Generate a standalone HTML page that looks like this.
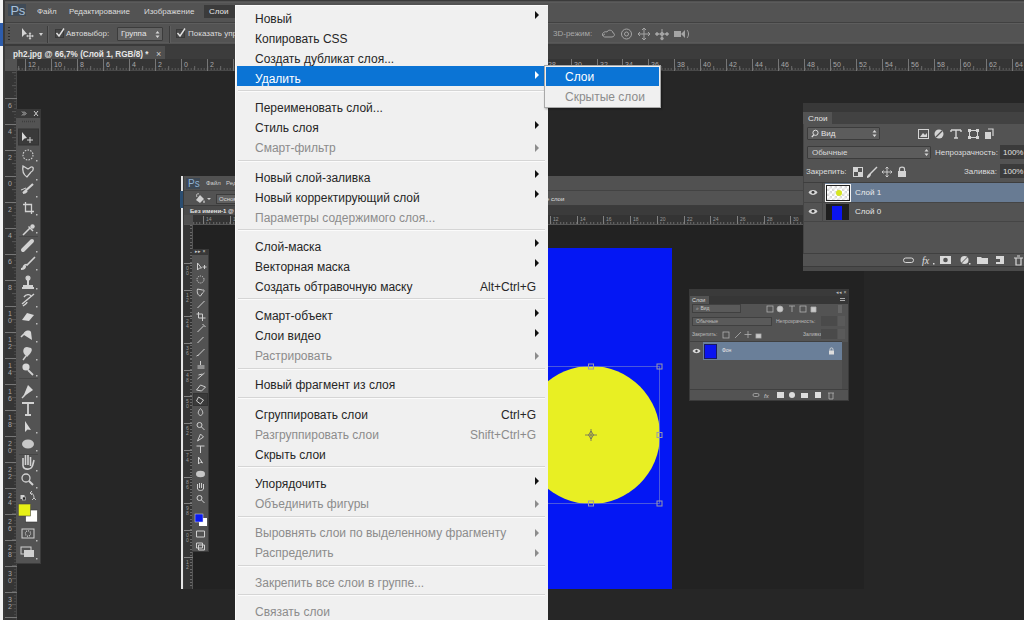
<!DOCTYPE html>
<html><head><meta charset="utf-8">
<style>
*{margin:0;padding:0;box-sizing:border-box}
html,body{width:1024px;height:620px;overflow:hidden;background:#262626;font-family:"Liberation Sans",sans-serif}
.a{position:absolute}
.t{position:absolute;white-space:nowrap;line-height:1}
.m{font-size:12px}
.ui{font-size:8px;color:#dcdcdc}
.rl{font-size:7px;color:#a8a8a8}
svg{position:absolute;overflow:visible}
</style></head>
<body>
<!-- left strip -->
<div class="a" style="left:0;top:0;width:3px;height:620px;background:#f4f4f4"></div>
<div class="a" style="left:0;top:23px;width:3px;height:23px;background:#2d5cab"></div>
<div class="a" style="left:3px;top:0;width:2px;height:620px;background:#3a3a3a"></div>

<!-- menubar -->
<div class="a" style="left:5px;top:0;width:1019px;height:23px;background:#535353;border-top:1px solid #3a3a3a;border-bottom:1px solid #414141"></div>
<div class="a" style="left:8px;top:4px;width:18px;height:12px;background:#3f4a56"></div>
<div class="t" style="left:10.5px;top:4px;font-size:13px;color:#a6c0da;letter-spacing:-0.3px">Ps</div>
<div class="t ui" style="left:37px;top:8px">Файл</div>
<div class="t ui" style="left:69px;top:8px">Редактирование</div>
<div class="t ui" style="left:144px;top:8px">Изображение</div>
<div class="a" style="left:204px;top:5px;width:31px;height:13px;background:#3b3b3b"></div>
<div class="t ui" style="left:209px;top:8px;color:#e8e8e8">Слои</div>

<!-- options bar -->
<div class="a" style="left:5px;top:23px;width:1019px;height:23px;background:#535353;border-bottom:2px solid #3a3a3a"></div>
<div class="a" style="left:5px;top:23px;width:1019px;height:1px;background:#5d5d5d"></div>
<div class="a" style="left:5px;top:42px;width:1019px;height:1px;background:#595959"></div>
<div class="a" style="left:5px;top:2px;width:1019px;height:1px;background:#5b5b5b"></div>
<div class="a" style="left:8px;top:27px;width:2px;height:15px;background-image:repeating-linear-gradient(to bottom,#2e2e2e 0 1px,transparent 1px 3px)"></div>
<svg style="left:21px;top:27px" width="14" height="13" viewBox="0 0 14 13"><path d="M1 1 L1 10 L3.5 7.5 L6 7 Z" fill="#d6d6d6"/><path d="M9 6 V12 M6 9 H12" stroke="#d6d6d6" stroke-width="1.2"/><path d="M8 7 L9 5.6 L10 7 M8 11 L9 12.4 L10 11 M7 8 L5.6 9 L7 10 M11 8 L12.4 9 L11 10" stroke="#d6d6d6" stroke-width=".8" fill="none"/></svg>
<div class="a" style="left:39px;top:33px;width:0;height:0;border-left:2.5px solid transparent;border-right:2.5px solid transparent;border-top:3px solid #d0d0d0"></div>
<div class="a" style="left:47px;top:26px;width:1px;height:17px;background:#3c3c3c"></div>
<div class="a" style="left:48px;top:26px;width:1px;height:17px;background:#5e5e5e"></div>
<div class="a" style="left:55px;top:29px;width:9px;height:9px;background:#474747;border:1px solid #3a3a3a"></div>
<svg style="left:55px;top:27px" width="10" height="11" viewBox="0 0 10 11"><path d="M1.5 6 L4 9 L9 1.5" stroke="#e0e0e0" stroke-width="1.4" fill="none"/></svg>
<div class="t ui" style="left:66px;top:30px">Автовыбор:</div>
<div class="a" style="left:117px;top:27px;width:46px;height:14px;background:#626262;border:1px solid #3c3c3c;border-radius:1px"></div>
<div class="t ui" style="left:121px;top:30px;color:#e6e6e6">Группа</div>
<svg style="left:155px;top:30px" width="5" height="9" viewBox="0 0 5 9"><path d="M0.5 3.5 L2.5 1 L4.5 3.5 Z M0.5 5.5 L2.5 8 L4.5 5.5 Z" fill="#d8d8d8"/></svg>
<div class="a" style="left:169px;top:26px;width:1px;height:17px;background:#3c3c3c"></div>
<div class="a" style="left:170px;top:26px;width:1px;height:17px;background:#5e5e5e"></div>
<div class="a" style="left:176px;top:29px;width:9px;height:9px;background:#474747;border:1px solid #3a3a3a"></div>
<svg style="left:176px;top:27px" width="10" height="11" viewBox="0 0 10 11"><path d="M1.5 6 L4 9 L9 1.5" stroke="#e0e0e0" stroke-width="1.4" fill="none"/></svg>
<div class="t ui" style="left:188px;top:30px">Показать упр</div>
<div class="t ui" style="left:553px;top:30px;color:#a8a8a8">3D-режим:</div>
<svg style="left:601px;top:27px" width="90" height="14" viewBox="0 0 90 14" fill="none" stroke="#a4a4a4" stroke-width="1">
<path d="M2 9 C0 6 4 4 6 5 C7 2 12 3 12 6 C14 6 14 10 11 10 L4 10 C2 10 1 8 4 7"/>
<circle cx="25.5" cy="7" r="5"/><circle cx="25.5" cy="7" r="2"/>
<path d="M43 1 V13 M37 7 H49 M41 3 L43 1 L45 3 M41 11 L43 13 L45 11 M39 5 L37 7 L39 9 M47 5 L49 7 L47 9"/>
<path d="M55 7 H67 M61 2 V12" /><circle cx="61" cy="7" r="1.6" fill="#a4a4a4"/><circle cx="56" cy="7" r="1.3" fill="#a4a4a4"/><circle cx="66" cy="7" r="1.3" fill="#a4a4a4"/><circle cx="61" cy="11.5" r="1.3" fill="#a4a4a4"/>
<rect x="73" y="4" width="7" height="6" fill="#a4a4a4" stroke="none"/><path d="M80 7 L84 3 V11 Z" fill="#a4a4a4" stroke="none"/><path d="M86 3 C88 5 88 9 86 11"/>
</svg>


<!-- tab bar -->
<div class="a" style="left:5px;top:46px;width:1019px;height:13px;background:#3c3c3c"></div>
<div class="a" style="left:5px;top:46px;width:160px;height:13px;background:#4f4f4f"></div>
<div class="t" style="left:13px;top:50.5px;font-size:8.2px;font-weight:bold;color:#e6e6e6">ph2.jpg @ 66,7% (Слой 1, RGB/8) *</div>
<div class="t" style="left:156px;top:50px;font-size:9px;color:#d0d0d0">×</div>

<!-- rulers -->
<div class="a" style="left:5px;top:59px;width:1019px;height:12px;background:#353535"></div>
<div class="a" style="left:17px;top:68px;width:1007px;height:3px;background-image:repeating-linear-gradient(to right,#5c5c5c 0 1px,transparent 1px 3.24625px);background-position:1.687500000000007px 0"></div>
<div class="a" style="left:17px;top:66px;width:1007px;height:5px;background-image:repeating-linear-gradient(to right,#6a6a6a 0 1px,transparent 1px 12.985px);background-position:8.180000000000021px 0"></div>
<div class="a" style="left:5px;top:70px;width:1019px;height:1px;background:#484848"></div>
<div class="a" style="left:25px;top:59px;width:1px;height:12px;background:#767676"></div>
<div class="t rl" style="left:28px;top:61px">12</div>
<div class="a" style="left:51px;top:59px;width:1px;height:12px;background:#767676"></div>
<div class="t rl" style="left:54px;top:61px">10</div>
<div class="a" style="left:77px;top:59px;width:1px;height:12px;background:#767676"></div>
<div class="t rl" style="left:80px;top:61px">8</div>
<div class="a" style="left:103px;top:59px;width:1px;height:12px;background:#767676"></div>
<div class="t rl" style="left:106px;top:61px">6</div>
<div class="a" style="left:129px;top:59px;width:1px;height:12px;background:#767676"></div>
<div class="t rl" style="left:132px;top:61px">4</div>
<div class="a" style="left:155px;top:59px;width:1px;height:12px;background:#767676"></div>
<div class="t rl" style="left:158px;top:61px">2</div>
<div class="a" style="left:181px;top:59px;width:1px;height:12px;background:#767676"></div>
<div class="t rl" style="left:184px;top:61px">0</div>
<div class="a" style="left:207px;top:59px;width:1px;height:12px;background:#767676"></div>
<div class="t rl" style="left:210px;top:61px">2</div>
<div class="a" style="left:233px;top:59px;width:1px;height:12px;background:#767676"></div>
<div class="t rl" style="left:236px;top:61px">4</div>
<div class="a" style="left:259px;top:59px;width:1px;height:12px;background:#767676"></div>
<div class="t rl" style="left:262px;top:61px">6</div>
<div class="a" style="left:285px;top:59px;width:1px;height:12px;background:#767676"></div>
<div class="t rl" style="left:288px;top:61px">8</div>
<div class="a" style="left:311px;top:59px;width:1px;height:12px;background:#767676"></div>
<div class="t rl" style="left:314px;top:61px">10</div>
<div class="a" style="left:337px;top:59px;width:1px;height:12px;background:#767676"></div>
<div class="t rl" style="left:340px;top:61px">12</div>
<div class="a" style="left:363px;top:59px;width:1px;height:12px;background:#767676"></div>
<div class="t rl" style="left:366px;top:61px">14</div>
<div class="a" style="left:389px;top:59px;width:1px;height:12px;background:#767676"></div>
<div class="t rl" style="left:392px;top:61px">16</div>
<div class="a" style="left:415px;top:59px;width:1px;height:12px;background:#767676"></div>
<div class="t rl" style="left:418px;top:61px">18</div>
<div class="a" style="left:441px;top:59px;width:1px;height:12px;background:#767676"></div>
<div class="t rl" style="left:444px;top:61px">20</div>
<div class="a" style="left:467px;top:59px;width:1px;height:12px;background:#767676"></div>
<div class="t rl" style="left:470px;top:61px">22</div>
<div class="a" style="left:493px;top:59px;width:1px;height:12px;background:#767676"></div>
<div class="t rl" style="left:496px;top:61px">24</div>
<div class="a" style="left:519px;top:59px;width:1px;height:12px;background:#767676"></div>
<div class="t rl" style="left:522px;top:61px">26</div>
<div class="a" style="left:545px;top:59px;width:1px;height:12px;background:#767676"></div>
<div class="t rl" style="left:548px;top:61px">28</div>
<div class="a" style="left:571px;top:59px;width:1px;height:12px;background:#767676"></div>
<div class="t rl" style="left:574px;top:61px">30</div>
<div class="a" style="left:597px;top:59px;width:1px;height:12px;background:#767676"></div>
<div class="t rl" style="left:600px;top:61px">32</div>
<div class="a" style="left:622px;top:59px;width:1px;height:12px;background:#767676"></div>
<div class="t rl" style="left:625px;top:61px">34</div>
<div class="a" style="left:648px;top:59px;width:1px;height:12px;background:#767676"></div>
<div class="t rl" style="left:651px;top:61px">36</div>
<div class="a" style="left:674px;top:59px;width:1px;height:12px;background:#767676"></div>
<div class="t rl" style="left:677px;top:61px">38</div>
<div class="a" style="left:700px;top:59px;width:1px;height:12px;background:#767676"></div>
<div class="t rl" style="left:703px;top:61px">40</div>
<div class="a" style="left:726px;top:59px;width:1px;height:12px;background:#767676"></div>
<div class="t rl" style="left:729px;top:61px">42</div>
<div class="a" style="left:752px;top:59px;width:1px;height:12px;background:#767676"></div>
<div class="t rl" style="left:755px;top:61px">44</div>
<div class="a" style="left:778px;top:59px;width:1px;height:12px;background:#767676"></div>
<div class="t rl" style="left:781px;top:61px">46</div>
<div class="a" style="left:804px;top:59px;width:1px;height:12px;background:#767676"></div>
<div class="t rl" style="left:807px;top:61px">48</div>
<div class="a" style="left:830px;top:59px;width:1px;height:12px;background:#767676"></div>
<div class="t rl" style="left:833px;top:61px">50</div>
<div class="a" style="left:856px;top:59px;width:1px;height:12px;background:#767676"></div>
<div class="t rl" style="left:859px;top:61px">52</div>
<div class="a" style="left:882px;top:59px;width:1px;height:12px;background:#767676"></div>
<div class="t rl" style="left:885px;top:61px">54</div>
<div class="a" style="left:908px;top:59px;width:1px;height:12px;background:#767676"></div>
<div class="t rl" style="left:911px;top:61px">56</div>
<div class="a" style="left:934px;top:59px;width:1px;height:12px;background:#767676"></div>
<div class="t rl" style="left:937px;top:61px">58</div>
<div class="a" style="left:960px;top:59px;width:1px;height:12px;background:#767676"></div>
<div class="t rl" style="left:963px;top:61px">60</div>
<div class="a" style="left:986px;top:59px;width:1px;height:12px;background:#767676"></div>
<div class="t rl" style="left:989px;top:61px">62</div>
<div class="a" style="left:1012px;top:59px;width:1px;height:12px;background:#767676"></div>
<div class="t rl" style="left:1015px;top:61px">64</div>
<div class="a" style="left:5px;top:59px;width:12px;height:12px;background:#535353"></div>
<div class="a" style="left:5px;top:71px;width:12px;height:549px;background:#353535"></div>
<div class="a" style="left:14px;top:71px;width:3px;height:549px;background-image:repeating-linear-gradient(to bottom,#484848 0 1px,transparent 1px 3.24625px);background-position:0 1.1200000000000045px"></div>
<div class="a" style="left:12px;top:71px;width:5px;height:549px;background-image:repeating-linear-gradient(to bottom,#555555 0 1px,transparent 1px 12.985px);background-position:0 1.1200000000000045px"></div>
<div class="a" style="left:16px;top:71px;width:1px;height:549px;background:#484848"></div>
<div class="a" style="left:5px;top:98px;width:12px;height:1px;background:#767676"></div>
<div class="t rl" style="left:8px;top:102px">6</div>
<div class="a" style="left:5px;top:124px;width:12px;height:1px;background:#767676"></div>
<div class="t rl" style="left:8px;top:128px">4</div>
<div class="a" style="left:5px;top:150px;width:12px;height:1px;background:#767676"></div>
<div class="t rl" style="left:8px;top:154px">2</div>
<div class="a" style="left:5px;top:176px;width:12px;height:1px;background:#767676"></div>
<div class="t rl" style="left:8px;top:180px">0</div>
<div class="a" style="left:5px;top:202px;width:12px;height:1px;background:#767676"></div>
<div class="t rl" style="left:8px;top:206px">2</div>
<div class="a" style="left:5px;top:228px;width:12px;height:1px;background:#767676"></div>
<div class="t rl" style="left:8px;top:232px">4</div>
<div class="a" style="left:5px;top:254px;width:12px;height:1px;background:#767676"></div>
<div class="t rl" style="left:8px;top:258px">6</div>
<div class="a" style="left:5px;top:280px;width:12px;height:1px;background:#767676"></div>
<div class="t rl" style="left:8px;top:284px">8</div>
<div class="a" style="left:5px;top:306px;width:12px;height:1px;background:#767676"></div>
<div class="t rl" style="left:8px;top:310px;line-height:7px">1<br>0</div>
<div class="a" style="left:5px;top:332px;width:12px;height:1px;background:#767676"></div>
<div class="t rl" style="left:8px;top:336px;line-height:7px">1<br>2</div>
<div class="a" style="left:5px;top:358px;width:12px;height:1px;background:#767676"></div>
<div class="t rl" style="left:8px;top:362px;line-height:7px">1<br>4</div>
<div class="a" style="left:5px;top:384px;width:12px;height:1px;background:#767676"></div>
<div class="t rl" style="left:8px;top:388px;line-height:7px">1<br>6</div>
<div class="a" style="left:5px;top:410px;width:12px;height:1px;background:#767676"></div>
<div class="t rl" style="left:8px;top:414px;line-height:7px">1<br>8</div>
<div class="a" style="left:5px;top:436px;width:12px;height:1px;background:#767676"></div>
<div class="t rl" style="left:8px;top:440px;line-height:7px">2<br>0</div>
<div class="a" style="left:5px;top:462px;width:12px;height:1px;background:#767676"></div>
<div class="t rl" style="left:8px;top:466px;line-height:7px">2<br>2</div>
<div class="a" style="left:5px;top:488px;width:12px;height:1px;background:#767676"></div>
<div class="t rl" style="left:8px;top:492px;line-height:7px">2<br>4</div>
<div class="a" style="left:5px;top:514px;width:12px;height:1px;background:#767676"></div>
<div class="t rl" style="left:8px;top:518px;line-height:7px">2<br>6</div>
<div class="a" style="left:5px;top:540px;width:12px;height:1px;background:#767676"></div>
<div class="t rl" style="left:8px;top:544px;line-height:7px">2<br>8</div>
<div class="a" style="left:5px;top:566px;width:12px;height:1px;background:#767676"></div>
<div class="t rl" style="left:8px;top:570px;line-height:7px">3<br>0</div>
<div class="a" style="left:5px;top:592px;width:12px;height:1px;background:#767676"></div>
<div class="t rl" style="left:8px;top:596px;line-height:7px">3<br>2</div>
<div class="a" style="left:5px;top:617px;width:12px;height:1px;background:#767676"></div>
<div class="t rl" style="left:8px;top:621px;line-height:7px">3<br>4</div>


<!-- toolbox -->
<div class="a" style="left:16px;top:109px;width:25px;height:455px;background:#535353;border-right:1px solid #3c3c3c;border-bottom:1px solid #3c3c3c"></div>
<div class="a" style="left:16px;top:109px;width:25px;height:9px;background:#393939"></div>
<svg style="left:16px;top:109px" width="25" height="454" viewBox="0 0 25 454" fill="none" stroke="#d2d2d2" stroke-width="1.1">
<path d="M6 2.5 L8 4.5 L6 6.5 M8 2.5 L10 4.5 L8 6.5" stroke="#cfcfcf" stroke-width=".9"/>
<path d="M18 2 L22 7 M22 2 L18 7" stroke="#cfcfcf" stroke-width="1"/>
<path d="M6 12.5 H19" stroke="#3e3e3e" stroke-width="1.5" stroke-dasharray="1 1"/>
<rect x="2.5" y="20" width="20" height="16" fill="#3a3a3a" stroke="#333" stroke-width="1"/>
<path d="M6 23 L6 32 L8.5 29.5 L11 29 Z" fill="#d8d8d8" stroke="none"/><path d="M14 28 V34 M11 31 H17" stroke-width="1"/>
<circle cx="12" cy="46" r="5" stroke-dasharray="1.6 1.2"/>
<path d="M7 57 C6 62 8 66 11 68 L15 63 C18 62 18 57 15 58 L12 60 Z" stroke-width="1.3"/>
<path d="M7 84 L17 75 M7 84 C9 84 11 82 11 82" stroke-width="2.2"/><path d="M5 81 L10 79" stroke-width="1"/>
<path d="M9.5 93 V102.5 H18 M7 95.5 H15.5 V105" stroke-width="1.3"/>
<path d="M7 126 L14 119" stroke-width="1.6"/><path d="M12.5 117.5 L17 122" stroke-width="1.4"/><circle cx="16.5" cy="117.5" r="2.2" fill="#d2d2d2" stroke="none"/>
<path d="M7 141 L16 132" stroke-width="4" stroke-linecap="round"/>
<path d="M7 159 C8 156 10 155 11 156 L19 148" stroke-width="1.6"/><path d="M5 160 C7 160 9 159 9 157" stroke-width="2.2"/>
<g transform="translate(0,3)"><path d="M12 166 V173 M7 174 H17 M6 176 H18" stroke-width="2"/><circle cx="12" cy="166" r="2" fill="#d2d2d2"/></g>
<g transform="translate(0,2)"><path d="M6 193 L18 183 M8 186 C10 183 14 183 15 185 M7 195 C9 193 11 193 11 191" stroke-width="1.4"/></g>
<path d="M6 211 L11 204 L18 206 L13 212 Z" fill="#d8d8d8" stroke="none"/>
<g transform="translate(0,2)"><path d="M8 224 C7 220 13 218 15 221 L16 229" fill="#d8d8d8" stroke="none"/><path d="M5 226 L10 221" stroke-width="1.6"/></g>
<path d="M11 238 C7 238 6 243 9 246 L11 248 C15 244 17 241 15 239 Z" fill="#d2d2d2" stroke="none"/><path d="M10 247 L7 251" stroke-width="1.4"/>
<circle cx="10" cy="258" r="3.6" fill="#d8d8d8" stroke="none"/><path d="M12 261 L17 266" stroke-width="1.8"/>
<path d="M7 288 L12 276 L17 281 Z" fill="#d8d8d8" stroke="none"/><path d="M6 289 L9 286" stroke-width="1.4"/>
<path d="M6 294 H18 M12 294 V306 M9 306 H15" stroke-width="1.8"/>
<path d="M9 312 V323 L11.5 320.5 L15 321 Z" fill="#d8d8d8" stroke="none"/>
<ellipse cx="12" cy="335" rx="6" ry="4.5" fill="#c8c8c8" stroke="none"/>
<path d="M7 357 V349 M9.5 356 V346 M12 356 V346 M14.5 357 V348 M7 357 C8 361 16 362 17 355 L18 351" stroke-width="1.6"/>
<circle cx="10" cy="369" r="4" stroke-width="1.3"/><path d="M13 372 L17 376" stroke-width="2"/>
<rect x="4.5" y="386" width="4" height="4" fill="#d0d0d0" stroke="none"/><rect x="6.5" y="388" width="3" height="3" fill="#222" stroke="#ddd" stroke-width=".6"/>
<path d="M14 384 C17 384 18 386 18 389 M16 391 L18 389 L20 391 M16 386 L14 384 L16 382" stroke-width=".9"/>
<rect x="2.5" y="395" width="12" height="12" fill="#e6f016" stroke="none"/>
<rect x="9.5" y="401" width="12" height="12" fill="#ffffff" stroke="#333" stroke-width=".6"/>
<rect x="2.5" y="395" width="12" height="12" fill="#e6f016" stroke="#444" stroke-width=".6"/>
<rect x="6" y="420" width="12" height="9" stroke-width="1"/><circle cx="12" cy="424.5" r="2.6" stroke-dasharray="1 1"/>
<rect x="5" y="438" width="10" height="7" stroke-width="1"/><rect x="8" y="441" width="10" height="7" fill="#d0d0d0" stroke="none"/>
<rect x="20" y="51" width="1.5" height="1.5" fill="#bdbdbd" stroke="none"/><rect x="20" y="70" width="1.5" height="1.5" fill="#bdbdbd" stroke="none"/><rect x="20" y="87" width="1.5" height="1.5" fill="#bdbdbd" stroke="none"/><rect x="20" y="105" width="1.5" height="1.5" fill="#bdbdbd" stroke="none"/><rect x="20" y="123" width="1.5" height="1.5" fill="#bdbdbd" stroke="none"/><rect x="20" y="142" width="1.5" height="1.5" fill="#bdbdbd" stroke="none"/><rect x="20" y="160" width="1.5" height="1.5" fill="#bdbdbd" stroke="none"/><rect x="20" y="179" width="1.5" height="1.5" fill="#bdbdbd" stroke="none"/><rect x="20" y="197" width="1.5" height="1.5" fill="#bdbdbd" stroke="none"/><rect x="20" y="214" width="1.5" height="1.5" fill="#bdbdbd" stroke="none"/><rect x="20" y="232" width="1.5" height="1.5" fill="#bdbdbd" stroke="none"/><rect x="20" y="250" width="1.5" height="1.5" fill="#bdbdbd" stroke="none"/><rect x="20" y="266" width="1.5" height="1.5" fill="#bdbdbd" stroke="none"/><rect x="20" y="287" width="1.5" height="1.5" fill="#bdbdbd" stroke="none"/><rect x="20" y="323" width="1.5" height="1.5" fill="#bdbdbd" stroke="none"/><rect x="20" y="341" width="1.5" height="1.5" fill="#bdbdbd" stroke="none"/><rect x="20" y="361" width="1.5" height="1.5" fill="#bdbdbd" stroke="none"/><rect x="20" y="378" width="1.5" height="1.5" fill="#bdbdbd" stroke="none"/><rect x="20" y="431" width="1.5" height="1.5" fill="#bdbdbd" stroke="none"/><rect x="20" y="449" width="1.5" height="1.5" fill="#bdbdbd" stroke="none"/><path d="M3 127.5 H22 M3 269.5 H22 M3 345.5 H22" stroke="#464646" stroke-width="1"/></svg>


<!-- inner window -->
<div class="a" style="left:181px;top:176px;width:683px;height:413px;background:#222222"></div>
<div class="a" style="left:181px;top:176px;width:683px;height:15px;background:#515151;border-bottom:1px solid #434343"></div>
<div class="a" style="left:186px;top:178px;width:14px;height:11px;background:#3e4955"></div>
<div class="t" style="left:188px;top:178.5px;font-size:10px;color:#8fb0d2">Ps</div>
<div class="t" style="left:206px;top:180px;font-size:6px;color:#d0d0d0">Файл</div>
<div class="t" style="left:226px;top:180px;font-size:6px;color:#d0d0d0">Редактирование</div>
<div class="a" style="left:181px;top:191px;width:683px;height:15px;background:#535353;border-bottom:1px solid #3c3c3c"></div>
<svg style="left:194px;top:193px" width="12" height="11" viewBox="0 0 12 11"><path d="M2 7 L6 2 L10 6 L6 10 Z" fill="#d0d0d0"/><path d="M5 1 C3 0 2 2 3 4" stroke="#d0d0d0" fill="none"/><path d="M10 7 C11 8 11 10 10 10 C9 10 9 8 10 7Z" fill="#d0d0d0"/></svg>
<div class="a" style="left:207px;top:198px;width:0;height:0;border-left:2px solid transparent;border-right:2px solid transparent;border-top:2px solid #cfcfcf"></div>
<div class="a" style="left:216px;top:194px;width:40px;height:10px;background:#606060;border:1px solid #3c3c3c"></div>
<div class="t" style="left:219px;top:196px;font-size:6px;color:#d8d8d8">Основной</div>
<div class="t" style="left:543px;top:195.5px;font-size:6px;color:#e0e0e0">се слои</div>
<div class="a" style="left:181px;top:206px;width:683px;height:9px;background:#3b3b3b"></div>
<div class="a" style="left:184px;top:206px;width:60px;height:9px;background:#4a4a4a"></div>
<div class="t" style="left:190px;top:207.5px;font-size:6px;font-weight:bold;color:#e4e4e4">Без имени-1 @ 25%</div>
<div class="a" style="left:184px;top:215px;width:680px;height:10px;background:#343434"></div>
<div class="a" style="left:193px;top:222px;width:671px;height:2px;background-image:repeating-linear-gradient(to right,#6a6a6a 0 1px,transparent 1px 3.3375px);background-position:3.2250000000000094px 0"></div>
<div class="a" style="left:184px;top:224px;width:680px;height:1px;background:#555"></div>
<div class="a" style="left:203px;top:216px;width:1px;height:8px;background:#808080"></div>
<div class="t" style="left:206px;top:217px;font-size:5px;color:#999">14</div>
<div class="a" style="left:230px;top:216px;width:1px;height:8px;background:#808080"></div>
<div class="t" style="left:233px;top:217px;font-size:5px;color:#999">12</div>
<div class="a" style="left:256px;top:216px;width:1px;height:8px;background:#808080"></div>
<div class="t" style="left:259px;top:217px;font-size:5px;color:#999">10</div>
<div class="a" style="left:283px;top:216px;width:1px;height:8px;background:#808080"></div>
<div class="t" style="left:286px;top:217px;font-size:5px;color:#999">8</div>
<div class="a" style="left:310px;top:216px;width:1px;height:8px;background:#808080"></div>
<div class="t" style="left:313px;top:217px;font-size:5px;color:#999">6</div>
<div class="a" style="left:336px;top:216px;width:1px;height:8px;background:#808080"></div>
<div class="t" style="left:339px;top:217px;font-size:5px;color:#999">4</div>
<div class="a" style="left:363px;top:216px;width:1px;height:8px;background:#808080"></div>
<div class="t" style="left:366px;top:217px;font-size:5px;color:#999">2</div>
<div class="a" style="left:390px;top:216px;width:1px;height:8px;background:#808080"></div>
<div class="t" style="left:393px;top:217px;font-size:5px;color:#999">0</div>
<div class="a" style="left:416px;top:216px;width:1px;height:8px;background:#808080"></div>
<div class="t" style="left:419px;top:217px;font-size:5px;color:#999">2</div>
<div class="a" style="left:443px;top:216px;width:1px;height:8px;background:#808080"></div>
<div class="t" style="left:446px;top:217px;font-size:5px;color:#999">4</div>
<div class="a" style="left:470px;top:216px;width:1px;height:8px;background:#808080"></div>
<div class="t" style="left:473px;top:217px;font-size:5px;color:#999">6</div>
<div class="a" style="left:497px;top:216px;width:1px;height:8px;background:#808080"></div>
<div class="t" style="left:500px;top:217px;font-size:5px;color:#999">8</div>
<div class="a" style="left:523px;top:216px;width:1px;height:8px;background:#808080"></div>
<div class="t" style="left:526px;top:217px;font-size:5px;color:#999">10</div>
<div class="a" style="left:550px;top:216px;width:1px;height:8px;background:#808080"></div>
<div class="t" style="left:553px;top:217px;font-size:5px;color:#999">12</div>
<div class="a" style="left:577px;top:216px;width:1px;height:8px;background:#808080"></div>
<div class="t" style="left:580px;top:217px;font-size:5px;color:#999">14</div>
<div class="a" style="left:603px;top:216px;width:1px;height:8px;background:#808080"></div>
<div class="t" style="left:606px;top:217px;font-size:5px;color:#999">16</div>
<div class="a" style="left:630px;top:216px;width:1px;height:8px;background:#808080"></div>
<div class="t" style="left:633px;top:217px;font-size:5px;color:#999">18</div>
<div class="a" style="left:657px;top:216px;width:1px;height:8px;background:#808080"></div>
<div class="t" style="left:660px;top:217px;font-size:5px;color:#999">20</div>
<div class="a" style="left:684px;top:216px;width:1px;height:8px;background:#808080"></div>
<div class="t" style="left:687px;top:217px;font-size:5px;color:#999">22</div>
<div class="a" style="left:710px;top:216px;width:1px;height:8px;background:#808080"></div>
<div class="t" style="left:713px;top:217px;font-size:5px;color:#999">24</div>
<div class="a" style="left:737px;top:216px;width:1px;height:8px;background:#808080"></div>
<div class="t" style="left:740px;top:217px;font-size:5px;color:#999">26</div>
<div class="a" style="left:764px;top:216px;width:1px;height:8px;background:#808080"></div>
<div class="t" style="left:767px;top:217px;font-size:5px;color:#999">28</div>
<div class="a" style="left:790px;top:216px;width:1px;height:8px;background:#808080"></div>
<div class="t" style="left:793px;top:217px;font-size:5px;color:#999">30</div>
<div class="a" style="left:817px;top:216px;width:1px;height:8px;background:#808080"></div>
<div class="t" style="left:820px;top:217px;font-size:5px;color:#999">32</div>
<div class="a" style="left:844px;top:216px;width:1px;height:8px;background:#808080"></div>
<div class="t" style="left:847px;top:217px;font-size:5px;color:#999">34</div>
<div class="a" style="left:184px;top:215px;width:9px;height:9px;background:#505050"></div>
<div class="a" style="left:184px;top:225px;width:9px;height:364px;background:#343434;border-right:1px solid #555"></div>
<div class="a" style="left:190px;top:225px;width:2px;height:364px;background-image:repeating-linear-gradient(to bottom,#6a6a6a 0 1px,transparent 1px 3.3375px)"></div>
<div class="a" style="left:184px;top:263px;width:9px;height:1px;background:#808080"></div>
<div class="t" style="left:186px;top:266px;font-size:5px;line-height:5px;color:#999">0<br>0</div>
<div class="a" style="left:184px;top:290px;width:9px;height:1px;background:#808080"></div>
<div class="t" style="left:186px;top:293px;font-size:5px;line-height:5px;color:#999">1<br>2</div>
<div class="a" style="left:184px;top:316px;width:9px;height:1px;background:#808080"></div>
<div class="t" style="left:186px;top:319px;font-size:5px;line-height:5px;color:#999">2<br>4</div>
<div class="a" style="left:184px;top:343px;width:9px;height:1px;background:#808080"></div>
<div class="t" style="left:186px;top:346px;font-size:5px;line-height:5px;color:#999">3<br>6</div>
<div class="a" style="left:184px;top:370px;width:9px;height:1px;background:#808080"></div>
<div class="t" style="left:186px;top:373px;font-size:5px;line-height:5px;color:#999">4<br>8</div>
<div class="a" style="left:184px;top:396px;width:9px;height:1px;background:#808080"></div>
<div class="t" style="left:186px;top:399px;font-size:5px;line-height:5px;color:#999">5<br>0</div>
<div class="a" style="left:184px;top:423px;width:9px;height:1px;background:#808080"></div>
<div class="t" style="left:186px;top:426px;font-size:5px;line-height:5px;color:#999">6<br>2</div>
<div class="a" style="left:184px;top:450px;width:9px;height:1px;background:#808080"></div>
<div class="t" style="left:186px;top:453px;font-size:5px;line-height:5px;color:#999">7<br>4</div>
<div class="a" style="left:184px;top:477px;width:9px;height:1px;background:#808080"></div>
<div class="t" style="left:186px;top:480px;font-size:5px;line-height:5px;color:#999">8<br>6</div>
<div class="a" style="left:184px;top:503px;width:9px;height:1px;background:#808080"></div>
<div class="t" style="left:186px;top:506px;font-size:5px;line-height:5px;color:#999">9<br>8</div>
<div class="a" style="left:184px;top:530px;width:9px;height:1px;background:#808080"></div>
<div class="t" style="left:186px;top:533px;font-size:5px;line-height:5px;color:#999">0<br>0</div>
<div class="a" style="left:184px;top:557px;width:9px;height:1px;background:#808080"></div>
<div class="t" style="left:186px;top:560px;font-size:5px;line-height:5px;color:#999">1<br>2</div>
<div class="a" style="left:181px;top:176px;width:2px;height:413px;background:#e6e6e6"></div>
<div class="a" style="left:180px;top:191px;width:3px;height:17px;background:#2b4d70"></div>
<div class="a" style="left:183px;top:176px;width:1px;height:413px;background:#3a3a3a"></div>
<div class="a" style="left:192px;top:249px;width:17px;height:303px;background:#525252;border-right:1px solid #3a3a3a;border-bottom:1px solid #3a3a3a"></div>
<div class="a" style="left:192px;top:249px;width:17px;height:6px;background:#383838"></div>
<div class="a" style="left:193px;top:393px;width:15px;height:13px;background:#3a3a3a;border:1px solid #333"></div>
<div class="t" style="left:195px;top:249px;font-size:5px;color:#cfcfcf">▸▸ ×</div>
<svg style="left:192px;top:0px" width="17" height="620" viewBox="0 0 17 620" fill="none" stroke="#cfcfcf" stroke-width="1"><path transform="translate(2.5 261)" d="M3 2 V9 L5 7 L7 7 Z M8 6 H12 M10 4 V8"/><circle cx="8.5" cy="279.5" r="3.5" stroke-dasharray="1.2 1"/><path transform="translate(2.5 286)" d="M3 3 C2 7 4 10 6 10 L8 7 C10 6 10 3 8 4 Z"/><path transform="translate(2.5 298)" d="M3 10 L10 3"/><path transform="translate(2.5 310)" d="M4 2 V8 H11 M2 4 H8 V11"/><path transform="translate(2.5 322)" d="M3 10 L9 4 M8 2 L11 5"/><path transform="translate(2.5 334)" d="M3 9 L9 3"/><path transform="translate(2.5 346)" d="M3 10 L10 3 M2 10 L4 9"/><path transform="translate(2.5 358)" d="M6 3 V7 M3 8 H10 M3 10 H10"/><path transform="translate(2.5 370)" d="M3 9 L10 3 M4 5 L8 4"/><path transform="translate(2.5 382)" d="M2 8 L6 3 L11 5 L7 9 Z"/><path transform="translate(2.5 394)" d="M4 3 L9 6 L6 10 L2 7 Z"/><path transform="translate(2.5 406.5)" d="M6 2 C3 5 3 8 6 9 C9 8 9 5 6 2"/><path transform="translate(2.5 419)" d="M5 6 m-2.5 0 a2.5 2.5 0 1 0 5 0 a2.5 2.5 0 1 0 -5 0 M7 8 L10 11"/><path transform="translate(2.5 431)" d="M3 10 L6 3 L9 6 Z"/><path transform="translate(2.5 443)" d="M2 3 H10 M6 3 V10"/><path transform="translate(2.5 455)" d="M4 2 V9 L6 7 L8 8 Z"/><ellipse cx="8.5" cy="474" rx="4.5" ry="3.2" fill="#c8c8c8" stroke="none"/><path transform="translate(2.5 480)" d="M3 9 V4 M5 8 V3 M7 8 V3 M9 9 V4 M3 9 C4 11 8 11 9 9"/><path transform="translate(2.5 492)" d="M5 6 m-2.5 0 a2.5 2.5 0 1 0 5 0 a2.5 2.5 0 1 0 -5 0 M7 8 L10 11"/><rect x="7" y="518" width="8" height="8" fill="#fff" stroke="none"/><rect x="3" y="514" width="8" height="8" fill="#0a1af0" stroke="#ddd" stroke-width=".5"/><path transform="translate(2.5 528)" d="M2 3 H10 V9 H2 Z"/><path transform="translate(2.5 540)" d="M2 3 H8 V8 H2 Z M4 5 H10 V10 H4 Z"/></svg>
<div class="a" style="left:400px;top:248px;width:272px;height:341px;background:#0417f4"></div>
<div class="a" style="left:522px;top:366px;width:138px;height:138px;border-radius:50%;background:#e8ef23"></div>
<svg style="left:0;top:0" width="1024" height="620"><rect x="522.5" y="366.5" width="137" height="137" fill="none" stroke="#5c6ad8" stroke-width=".8"/><rect x="588.5" y="364.0" width="5" height="5" fill="none" stroke="#9a9aa8" stroke-width="1"/><rect x="657.0" y="364.0" width="5" height="5" fill="none" stroke="#9a9aa8" stroke-width="1"/><rect x="657.0" y="432.5" width="5" height="5" fill="none" stroke="#9a9aa8" stroke-width="1"/><rect x="588.5" y="501.0" width="5" height="5" fill="none" stroke="#9a9aa8" stroke-width="1"/><rect x="657.0" y="501.0" width="5" height="5" fill="none" stroke="#9a9aa8" stroke-width="1"/><rect x="520.0" y="364.0" width="5" height="5" fill="none" stroke="#9a9aa8" stroke-width="1"/><rect x="520.0" y="432.5" width="5" height="5" fill="none" stroke="#9a9aa8" stroke-width="1"/><rect x="520.0" y="501.0" width="5" height="5" fill="none" stroke="#9a9aa8" stroke-width="1"/><path d="M591 431 L593.5 435 L591 439 L588.5 435 Z M591 429 V441 M585 435 H597" fill="none" stroke="#666" stroke-width=".8"/></svg>


<!-- layers panel -->
<div class="a" style="left:803px;top:103px;width:221px;height:168px;background:#535353;border-left:1px solid #444"></div>
<div class="a" style="left:803px;top:103px;width:221px;height:9px;background:#383838"></div>
<div class="a" style="left:803px;top:112px;width:221px;height:12px;background:#424242"></div>
<div class="a" style="left:803px;top:112px;width:29px;height:12px;background:#535353"></div>
<div class="t ui" style="left:808px;top:114.5px;color:#e4e4e4">Слои</div>
<div class="a" style="left:807px;top:127px;width:73px;height:13px;background:#5c5c5c;border:1px solid #3c3c3c;border-radius:1px"></div>
<svg style="left:811px;top:129px" width="8" height="9" viewBox="0 0 8 9"><circle cx="4.5" cy="3.8" r="2.6" fill="none" stroke="#ddd" stroke-width="1"/><path d="M2.8 5.8 L0.8 8" stroke="#ddd" stroke-width="1.2"/></svg>
<div class="t ui" style="left:821px;top:130px;color:#e4e4e4">Вид</div>
<svg style="left:872px;top:129px" width="5" height="9" viewBox="0 0 5 9"><path d="M0.5 3.5 L2.5 1 L4.5 3.5 Z M0.5 5.5 L2.5 8 L4.5 5.5 Z" fill="#d8d8d8"/></svg>
<svg style="left:916px;top:127px" width="80" height="14" viewBox="0 0 80 14" fill="none" stroke="#d4d4d4" stroke-width="1"><rect x="2.5" y="2.5" width="10" height="9"/><path d="M4 10 L7 6 L9 8 L11 6 V10 Z" fill="#d4d4d4" stroke="none"/><circle cx="23" cy="7" r="4.5" fill="#d4d4d4" stroke="none"/><path d="M20 10 L26 4" stroke="#535353" stroke-width="1.2"/><path d="M35 3 H45 M40 3 V11 M38 11 H42 M35 3 V5 M45 3 V5" stroke-width="1.4"/><rect x="53.5" y="3.5" width="8" height="7"/><rect x="52" y="2" width="3" height="3" fill="#d4d4d4" stroke="none"/><rect x="60" y="2" width="3" height="3" fill="#d4d4d4" stroke="none"/><rect x="52" y="9" width="3" height="3" fill="#d4d4d4" stroke="none"/><rect x="60" y="9" width="3" height="3" fill="#d4d4d4" stroke="none"/><path d="M69 5 H75 V12 H69 Z" fill="#d4d4d4" stroke="none"/><path d="M72 2 H77 V9" stroke-width="1.2"/></svg>
<div class="a" style="left:807px;top:146px;width:124px;height:13px;background:#5c5c5c;border:1px solid #3c3c3c;border-radius:1px"></div>
<div class="t ui" style="left:812px;top:149px;color:#dadada">Обычные</div>
<svg style="left:924px;top:148px" width="5" height="9" viewBox="0 0 5 9"><path d="M0.5 3.5 L2.5 1 L4.5 3.5 Z M0.5 5.5 L2.5 8 L4.5 5.5 Z" fill="#d8d8d8"/></svg>
<div class="t ui" style="left:935px;top:149px;color:#dedede">Непрозрачность:</div>
<div class="a" style="left:1000px;top:145px;width:24px;height:14px;background:#3b3b3b"></div>
<div class="t ui" style="left:1003px;top:149px;color:#e0e0e0">100%</div>
<div class="t ui" style="left:806px;top:168px;color:#dedede">Закрепить:</div>
<svg style="left:852px;top:165px" width="60" height="14" viewBox="0 0 60 14" fill="none" stroke="#d4d4d4" stroke-width="1"><rect x="1.5" y="2.5" width="9" height="9"/><path d="M2 3 H6 V7 H2 Z M6 7 H10 V11 H6 Z" fill="#d4d4d4" stroke="none"/><path d="M16 11 L25 2" stroke-width="1.5"/><path d="M15 12 C16 12 18 11 18 9" stroke-width="2"/><path d="M35 2 V12 M30 7 H40 M33.5 3.5 L35 2 L36.5 3.5 M33.5 10.5 L35 12 L36.5 10.5 M31.5 5.5 L30 7 L31.5 8.5 M38.5 5.5 L40 7 L38.5 8.5" stroke-width=".9"/><rect x="46" y="6" width="8" height="6" fill="#d4d4d4" stroke="none"/><path d="M47.5 6 V4 C47.5 1.5 52.5 1.5 52.5 4 V6" stroke-width="1.2"/></svg>
<div class="t ui" style="left:964px;top:168px;color:#dedede">Заливка:</div>
<div class="a" style="left:1000px;top:164px;width:24px;height:14px;background:#3b3b3b"></div>
<div class="t ui" style="left:1003px;top:168px;color:#e0e0e0">100%</div>
<div class="a" style="left:803px;top:182px;width:221px;height:1px;background:#3e3e3e"></div>
<div class="a" style="left:825px;top:183px;width:199px;height:19px;background:#687b93"></div>
<div class="a" style="left:803px;top:202px;width:221px;height:1px;background:#454545"></div>
<div class="a" style="left:803px;top:221px;width:221px;height:1px;background:#454545"></div>
<div class="a" style="left:822px;top:183px;width:1px;height:39px;background:#474747"></div>
<svg style="left:808px;top:189px" width="10" height="7" viewBox="0 0 10 7"><path d="M0.5 3.5 C2.5 0.3 7.5 0.3 9.5 3.5 C7.5 6.7 2.5 6.7 0.5 3.5 Z" fill="#d6d6d6"/><circle cx="5" cy="3.3" r="1.4" fill="#333"/></svg>
<svg style="left:808px;top:208px" width="10" height="7" viewBox="0 0 10 7"><path d="M0.5 3.5 C2.5 0.3 7.5 0.3 9.5 3.5 C7.5 6.7 2.5 6.7 0.5 3.5 Z" fill="#d6d6d6"/><circle cx="5" cy="3.3" r="1.4" fill="#333"/></svg>
<div class="a" style="left:825px;top:184px;width:26px;height:18px;background:#f4f4f4"></div>
<div class="a" style="left:826px;top:185px;width:24px;height:16px;border:1px solid #222;background-image:linear-gradient(45deg,#d8d8d8 25%,transparent 25%,transparent 75%,#d8d8d8 75%),linear-gradient(45deg,#d8d8d8 25%,transparent 25%,transparent 75%,#d8d8d8 75%);background-size:5px 5px;background-position:0 0,2.5px 2.5px;background-color:#fff"></div>
<div class="a" style="left:836px;top:190px;width:6px;height:6px;border-radius:50%;background:#d6e620"></div>
<div class="t ui" style="left:855px;top:189px;color:#ececec">Слой 1</div>
<div class="a" style="left:826px;top:204px;width:23px;height:16px;background:#1e1e1e"></div>
<div class="a" style="left:832px;top:206px;width:10px;height:14px;background:#0a14f0"></div>
<div class="t ui" style="left:855px;top:208px;color:#e8e8e8">Слой 0</div>
<div class="a" style="left:803px;top:253px;width:221px;height:1px;background:#404040"></div>
<div class="a" style="left:803px;top:254px;width:221px;height:12px;background:#535353"></div>
<div class="a" style="left:803px;top:266px;width:221px;height:5px;background:#4a4a4a;border-top:1px solid #3c3c3c"></div>
<svg style="left:900px;top:254px" width="124" height="12" viewBox="0 0 124 12" fill="none" stroke="#d8d8d8" stroke-width="1"><rect x="3.5" y="4" width="10" height="4.5" rx="2.2"/><text x="22" y="10" font-family="Liberation Serif" font-style="italic" font-size="10" fill="#e0e0e0" stroke="none">fx</text><rect x="33" y="9" width="1.5" height="1.5" fill="#d8d8d8" stroke="none"/><rect x="40" y="2" width="11" height="8" fill="#d8d8d8" stroke="none"/><circle cx="45.5" cy="6" r="2.3" fill="#535353" stroke="none"/><circle cx="64.5" cy="6" r="4" fill="#d8d8d8" stroke="none"/><path d="M61.5 9 L67.5 3" stroke="#535353"/><rect x="69" y="9" width="1.5" height="1.5" fill="#d8d8d8" stroke="none"/><path d="M77 3 H81 L82 4 H88 V10 H77 Z" fill="#d8d8d8" stroke="none"/><path d="M96 2 H104 V10 H96 Z" fill="#d8d8d8" stroke="none"/><path d="M96 5 H100 V8 H96" fill="#535353" stroke="none"/><path d="M114 4 H123 M116 4 V11 H121 V4 M117 2 H120" stroke-width="1.2"/></svg>
<div class="a" style="left:689px;top:289px;width:160px;height:112px;background:#535353;border:1px solid #3a3a3a"></div>
<div class="a" style="left:689px;top:289px;width:160px;height:7px;background:#3a3a3a"></div>
<div class="t" style="left:836px;top:290px;font-size:5px;color:#bbb">◂◂ ×</div>
<div class="a" style="left:690px;top:296px;width:158px;height:8px;background:#363636"></div>
<div class="a" style="left:690px;top:296px;width:19px;height:8px;background:#535353"></div>
<div class="t" style="left:692px;top:297.5px;font-size:5.5px;color:#ddd">Слои</div>
<div class="a" style="left:840px;top:298px;width:5px;height:3px;border-top:1px solid #aaa;border-bottom:1px solid #aaa"></div>
<div class="a" style="left:692px;top:304px;width:49px;height:9px;background:#5a5a5a;border:1px solid #404040"></div>
<div class="t" style="left:696px;top:306px;font-size:5px;color:#ccc">⌕ Вид</div>
<svg style="left:765px;top:304px" width="80" height="10" viewBox="0 0 80 10" fill="none" stroke="#b0b0b0" stroke-width=".8"><rect x="2" y="2" width="6" height="6"/><circle cx="15" cy="5" r="3" fill="#c8c8c8"/><path d="M24 2 H30 M27 2 V8"/><rect x="35" y="2" width="6" height="6"/><path d="M46 3 H51 V8 H46 Z" fill="#c8c8c8"/><rect x="73" y="1" width="4" height="8" fill="#666" stroke="none"/></svg>
<div class="a" style="left:692px;top:317px;width:80px;height:9px;background:#5a5a5a;border:1px solid #404040"></div>
<div class="t" style="left:696px;top:319px;font-size:5px;color:#bbb">Обычные</div>
<div class="t" style="left:776px;top:319px;font-size:5px;color:#bbb">Непрозрачность:</div>
<div class="a" style="left:821px;top:316px;width:16px;height:10px;background:#4a4a4a"></div>
<div class="a" style="left:838px;top:316px;width:7px;height:10px;background:#5a5a5a"></div>
<div class="t" style="left:692px;top:332px;font-size:5px;color:#bbb">Закрепить:</div>
<svg style="left:722px;top:330px" width="60" height="9" viewBox="0 0 60 9" fill="none" stroke="#b0b0b0" stroke-width=".8"><rect x="1" y="2" width="6" height="6"/><path d="M13 8 L19 2"/><path d="M26 1 V8 M22.5 4.5 H29.5"/><rect x="34" y="4" width="5" height="4" fill="#c8c8c8"/></svg>
<div class="t" style="left:803px;top:332px;font-size:5px;color:#bbb">Заливка:</div>
<div class="a" style="left:821px;top:329px;width:16px;height:10px;background:#4a4a4a"></div>
<div class="a" style="left:838px;top:329px;width:7px;height:10px;background:#5a5a5a"></div>
<div class="a" style="left:690px;top:341px;width:152px;height:1px;background:#404040"></div>
<div class="a" style="left:703px;top:342px;width:139px;height:18px;background:#6a7f99"></div>
<div class="a" style="left:690px;top:342px;width:13px;height:18px;background:#555"></div>
<svg style="left:692px;top:348px" width="9" height="6" viewBox="0 0 9 6"><path d="M0.5 3 C2.5 0 6.5 0 8.5 3 C6.5 6 2.5 6 0.5 3 Z" fill="#dcdcdc"/><circle cx="4.5" cy="3" r="1.2" fill="#444"/></svg>
<div class="a" style="left:704px;top:344px;width:13px;height:15px;background:#0a14f0;border:1px solid #1a1a60"></div>
<div class="t" style="left:722px;top:348px;font-size:5px;color:#e8e8e8">Фон</div>
<svg style="left:828px;top:347px" width="7" height="8" viewBox="0 0 7 8"><rect x="1" y="3.5" width="5" height="4" fill="#ddd"/><path d="M2 3.5 V2 C2 0.5 5 0.5 5 2 V3.5" stroke="#ddd" fill="none" stroke-width=".8"/></svg>
<div class="a" style="left:842px;top:342px;width:6px;height:47px;background:#4a4a4a"></div>
<div class="a" style="left:690px;top:389px;width:158px;height:1px;background:#404040"></div>
<svg style="left:750px;top:390px" width="90" height="10" viewBox="0 0 90 10" fill="none" stroke="#b0b0b0" stroke-width=".8"><rect x="3" y="3.5" width="6" height="3" rx="1.5"/><text x="14" y="8" font-size="6" font-style="italic" fill="#ccc" stroke="none">fx</text><rect x="27" y="2" width="7" height="6" fill="#ddd" stroke="none"/><circle cx="42" cy="5" r="3" fill="#ddd" stroke="none"/><path d="M51 3 H58 V8 H51 Z" fill="#ddd" stroke="none"/><path d="M65 2 H71 V8 H65 Z" fill="#ddd" stroke="none"/><path d="M78 3 H84 M79 3 V9 H83 V3" /></svg>


<!-- menu -->
<div class="a" style="left:235px;top:5px;width:313px;height:615px;background:#f0f0f0;border-top:1px solid #fafafa;border-left:1px solid #fafafa"></div>
<div class="t m" style="left:255px;top:12.8px;color:#262626">Новый</div>
<div class="a" style="left:535px;top:11.3px;width:0;height:0;border-top:4px solid transparent;border-bottom:4px solid transparent;border-left:4px solid #111111"></div>
<div class="t m" style="left:255px;top:32.8px;color:#262626">Копировать CSS</div>
<div class="t m" style="left:255px;top:52.8px;color:#262626">Создать дубликат слоя...</div>
<div class="a" style="left:237px;top:66px;width:308px;height:20px;background:#0b74d5"></div>
<div class="t m" style="left:255px;top:72.8px;color:#ffffff">Удалить</div>
<div class="a" style="left:535px;top:71.3px;width:0;height:0;border-top:4px solid transparent;border-bottom:4px solid transparent;border-left:4px solid #ffffff"></div>
<div class="a" style="left:238px;top:90px;width:307px;height:1px;background:#d5d5d5"></div>
<div class="a" style="left:238px;top:91px;width:307px;height:1px;background:#fbfbfb"></div>
<div class="t m" style="left:255px;top:102.1px;color:#262626">Переименовать слой...</div>
<div class="t m" style="left:255px;top:122.1px;color:#262626">Стиль слоя</div>
<div class="a" style="left:535px;top:120.6px;width:0;height:0;border-top:4px solid transparent;border-bottom:4px solid transparent;border-left:4px solid #111111"></div>
<div class="t m" style="left:255px;top:142.1px;color:#8c8c8c">Смарт-фильтр</div>
<div class="a" style="left:535px;top:143.6px;width:0;height:0;border-top:4px solid transparent;border-bottom:4px solid transparent;border-left:4px solid #8c8c8c"></div>
<div class="a" style="left:238px;top:160px;width:307px;height:1px;background:#d5d5d5"></div>
<div class="a" style="left:238px;top:161px;width:307px;height:1px;background:#fbfbfb"></div>
<div class="t m" style="left:255px;top:171.5px;color:#262626">Новый слой-заливка</div>
<div class="a" style="left:535px;top:170.0px;width:0;height:0;border-top:4px solid transparent;border-bottom:4px solid transparent;border-left:4px solid #111111"></div>
<div class="t m" style="left:255px;top:191.5px;color:#262626">Новый корректирующий слой</div>
<div class="a" style="left:535px;top:190.0px;width:0;height:0;border-top:4px solid transparent;border-bottom:4px solid transparent;border-left:4px solid #111111"></div>
<div class="t m" style="left:255px;top:211.5px;color:#8c8c8c">Параметры содержимого слоя...</div>
<div class="a" style="left:238px;top:229px;width:307px;height:1px;background:#d5d5d5"></div>
<div class="a" style="left:238px;top:230px;width:307px;height:1px;background:#fbfbfb"></div>
<div class="t m" style="left:255px;top:240.8px;color:#262626">Слой-маска</div>
<div class="a" style="left:535px;top:239.3px;width:0;height:0;border-top:4px solid transparent;border-bottom:4px solid transparent;border-left:4px solid #111111"></div>
<div class="t m" style="left:255px;top:260.8px;color:#262626">Векторная маска</div>
<div class="a" style="left:535px;top:259.3px;width:0;height:0;border-top:4px solid transparent;border-bottom:4px solid transparent;border-left:4px solid #111111"></div>
<div class="t m" style="left:255px;top:280.8px;color:#262626">Создать обтравочную маску</div>
<div class="t m" style="right:488px;top:280.8px;color:#262626">Alt+Ctrl+G</div>
<div class="a" style="left:238px;top:298px;width:307px;height:1px;background:#d5d5d5"></div>
<div class="a" style="left:238px;top:299px;width:307px;height:1px;background:#fbfbfb"></div>
<div class="t m" style="left:255px;top:310.1px;color:#262626">Смарт-объект</div>
<div class="a" style="left:535px;top:308.6px;width:0;height:0;border-top:4px solid transparent;border-bottom:4px solid transparent;border-left:4px solid #111111"></div>
<div class="t m" style="left:255px;top:330.1px;color:#262626">Слои видео</div>
<div class="a" style="left:535px;top:328.6px;width:0;height:0;border-top:4px solid transparent;border-bottom:4px solid transparent;border-left:4px solid #111111"></div>
<div class="t m" style="left:255px;top:350.1px;color:#8c8c8c">Растрировать</div>
<div class="a" style="left:535px;top:351.6px;width:0;height:0;border-top:4px solid transparent;border-bottom:4px solid transparent;border-left:4px solid #8c8c8c"></div>
<div class="a" style="left:238px;top:368px;width:307px;height:1px;background:#d5d5d5"></div>
<div class="a" style="left:238px;top:369px;width:307px;height:1px;background:#fbfbfb"></div>
<div class="t m" style="left:255px;top:379.4px;color:#262626">Новый фрагмент из слоя</div>
<div class="a" style="left:238px;top:397px;width:307px;height:1px;background:#d5d5d5"></div>
<div class="a" style="left:238px;top:398px;width:307px;height:1px;background:#fbfbfb"></div>
<div class="t m" style="left:255px;top:408.8px;color:#262626">Сгруппировать слои</div>
<div class="t m" style="right:488px;top:408.8px;color:#262626">Ctrl+G</div>
<div class="t m" style="left:255px;top:428.8px;color:#8c8c8c">Разгруппировать слои</div>
<div class="t m" style="right:488px;top:428.8px;color:#8c8c8c">Shift+Ctrl+G</div>
<div class="t m" style="left:255px;top:448.8px;color:#262626">Скрыть слои</div>
<div class="a" style="left:238px;top:466px;width:307px;height:1px;background:#d5d5d5"></div>
<div class="a" style="left:238px;top:467px;width:307px;height:1px;background:#fbfbfb"></div>
<div class="t m" style="left:255px;top:478.1px;color:#262626">Упорядочить</div>
<div class="a" style="left:535px;top:476.6px;width:0;height:0;border-top:4px solid transparent;border-bottom:4px solid transparent;border-left:4px solid #111111"></div>
<div class="t m" style="left:255px;top:498.1px;color:#8c8c8c">Объединить фигуры</div>
<div class="a" style="left:535px;top:499.6px;width:0;height:0;border-top:4px solid transparent;border-bottom:4px solid transparent;border-left:4px solid #8c8c8c"></div>
<div class="a" style="left:238px;top:516px;width:307px;height:1px;background:#d5d5d5"></div>
<div class="a" style="left:238px;top:517px;width:307px;height:1px;background:#fbfbfb"></div>
<div class="t m" style="left:255px;top:527.4px;color:#8c8c8c">Выровнять слои по выделенному фрагменту</div>
<div class="a" style="left:535px;top:528.9px;width:0;height:0;border-top:4px solid transparent;border-bottom:4px solid transparent;border-left:4px solid #8c8c8c"></div>
<div class="t m" style="left:255px;top:547.4px;color:#8c8c8c">Распределить</div>
<div class="a" style="left:535px;top:548.9px;width:0;height:0;border-top:4px solid transparent;border-bottom:4px solid transparent;border-left:4px solid #8c8c8c"></div>
<div class="a" style="left:238px;top:565px;width:307px;height:1px;background:#d5d5d5"></div>
<div class="a" style="left:238px;top:566px;width:307px;height:1px;background:#fbfbfb"></div>
<div class="t m" style="left:255px;top:576.8px;color:#8c8c8c">Закрепить все слои в группе...</div>
<div class="a" style="left:238px;top:594px;width:307px;height:1px;background:#d5d5d5"></div>
<div class="a" style="left:238px;top:595px;width:307px;height:1px;background:#fbfbfb"></div>
<div class="t m" style="left:255px;top:606.1px;color:#8c8c8c">Связать слои</div>


<!-- submenu -->
<div class="a" style="left:544px;top:65px;width:117px;height:43px;background:#f0f0f0;border:1px solid #a8a8a8;box-shadow:1px 1px 2px rgba(0,0,0,.35)"></div>
<div class="a" style="left:546px;top:67px;width:113px;height:19px;background:#0b74d5"></div>
<div class="t m" style="left:565px;top:71px;color:#ffffff">Слои</div>
<div class="t m" style="left:565px;top:91px;color:#8c8c8c">Скрытые слои</div>
</body></html>
